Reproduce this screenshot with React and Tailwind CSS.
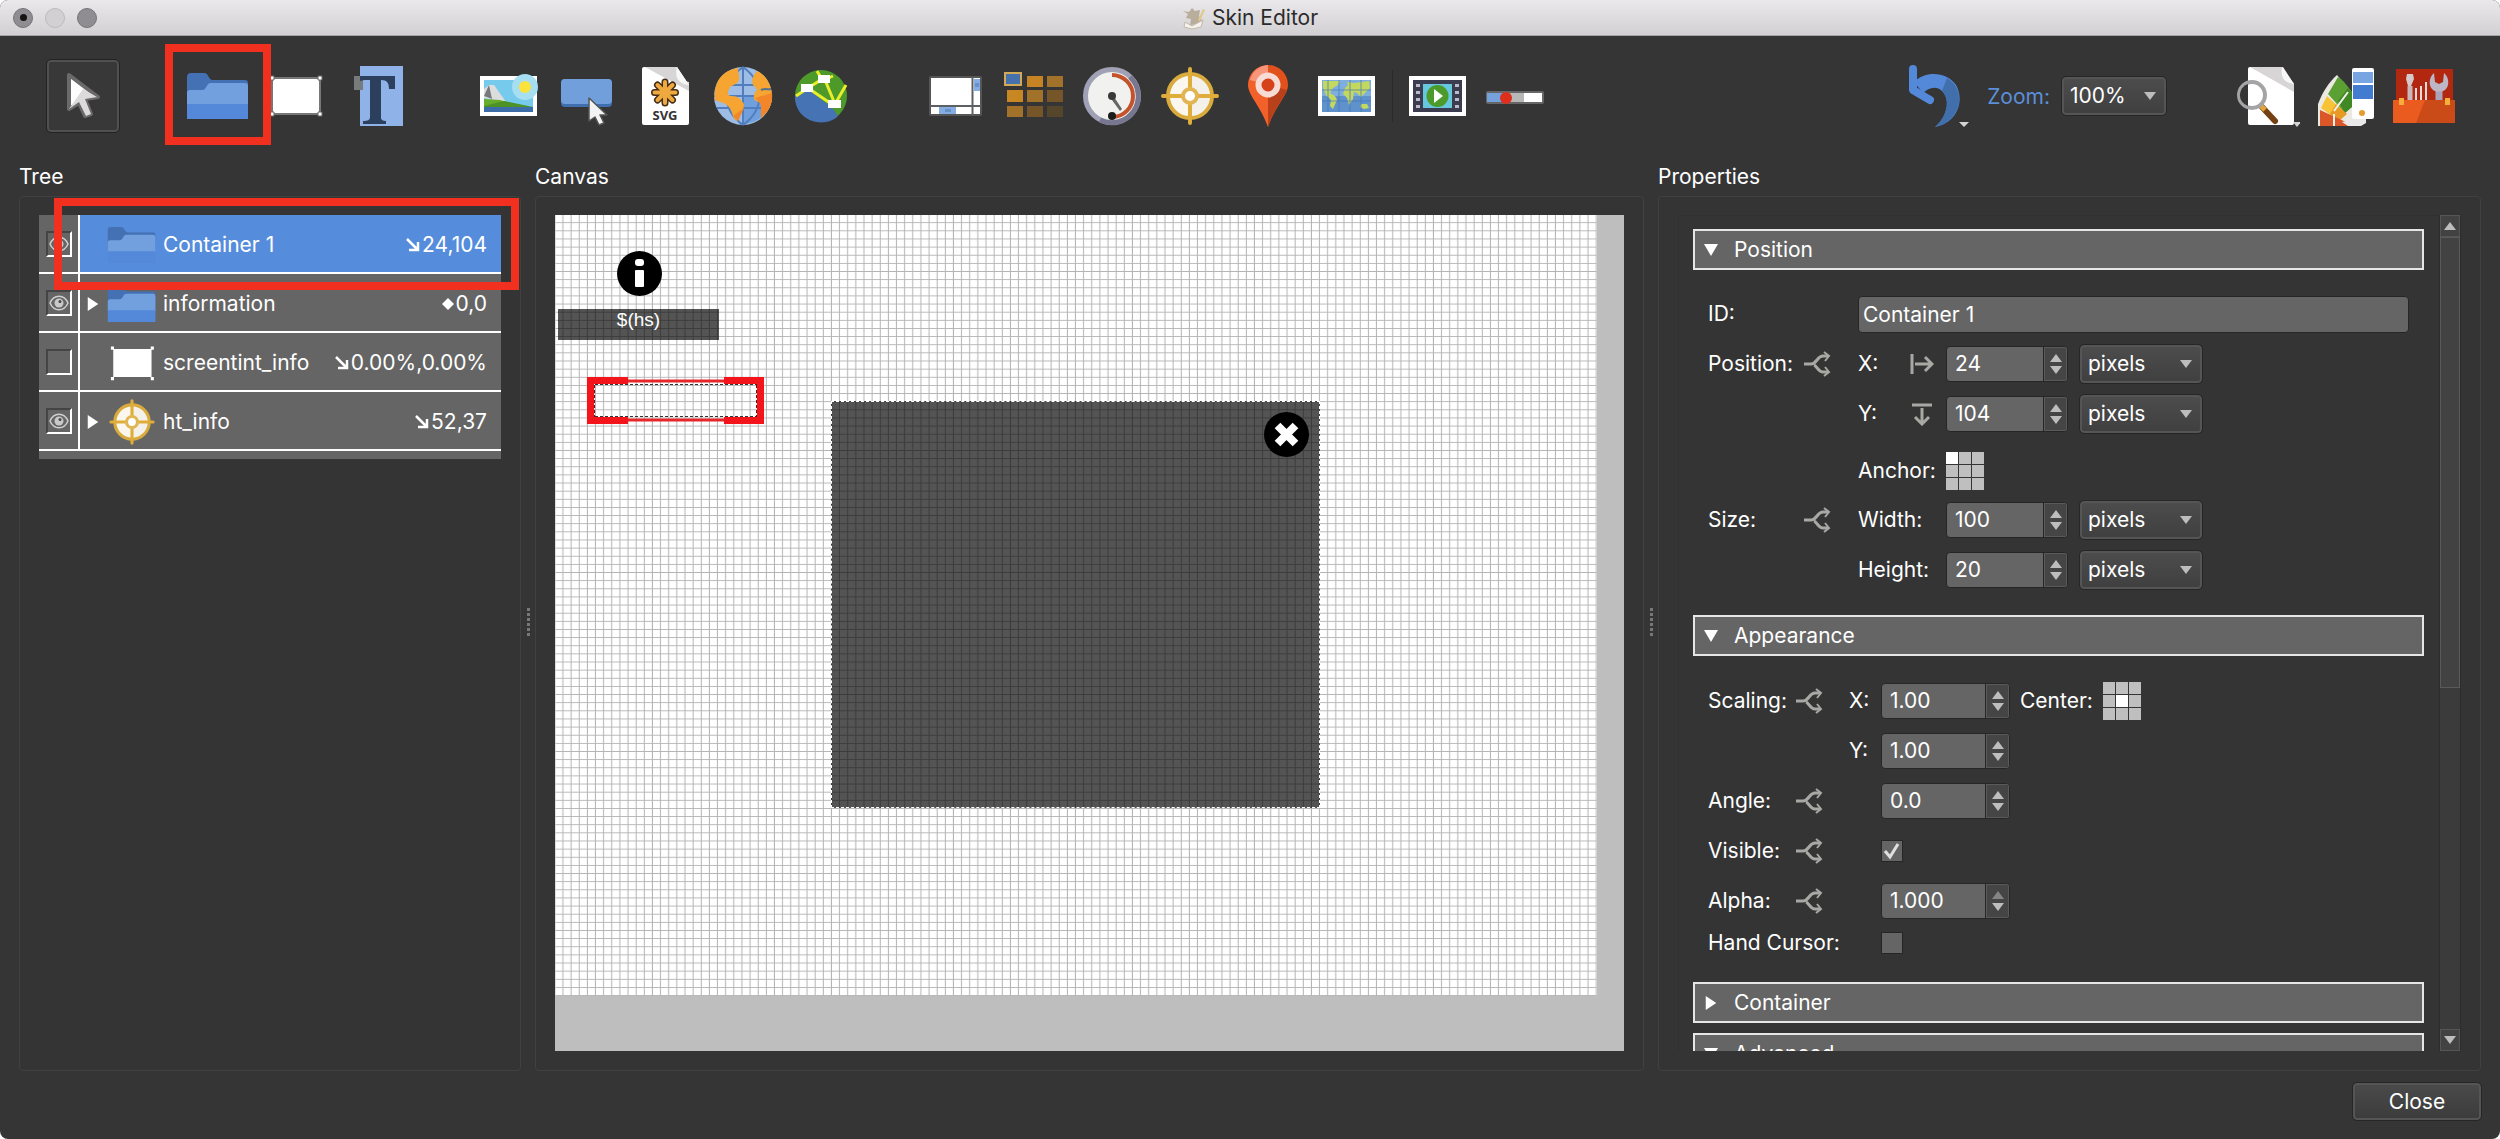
import React from 'react';

const CrosshairShape = () => (
  <>
    <circle cx="32" cy="32" r="22" fill="#fbf7ee" stroke="#d9ab3c" strokeWidth="4" />
    <path d="M32 12a20 20 0 0 1 0 40z" fill="#efece6" opacity=".6" />
    <path d="M32 5v18M32 41v18M5 32h18M41 32h18" stroke="#dfae3a" strokeWidth="4" strokeLinecap="round" />
    <circle cx="32" cy="32" r="7" fill="#fff" stroke="#e0b552" strokeWidth="4" />
  </>
);

const FolderShape = () => (
  <>
    <path d="M1 13a4 4 0 0 1 4-4h13c5 0 4 7 9 7h32a3 3 0 0 1 3 3v20H1z" fill="#4371b3" />
    <path d="M1 28a3 3 0 0 1 3-2h12c5 0 4-7 9-7h34a3 3 0 0 1 3 3v19H1z" fill="#72a0de" />
    <path d="M1 40h61v15H1z" fill="#5389d8" />
  </>
);

const Icon = ({ children, className = 'h-16 w-16' }) => (
  <svg viewBox="0 0 64 64" className={className} aria-hidden="true">
    {children}
  </svg>
);

const ArrowIcon = () => (
  <Icon>
    <path d="M18 11v34l10-6 6 13 6-2-6-15 13-2z" fill="#fdfdfd" stroke="#6a6a6a" strokeWidth="4" strokeLinejoin="round" />
    <path d="M18 45l14-20 14 8-12 2 6 15-5 2-7-14z" fill="#dcdada" />
  </Icon>
);

const FolderIcon = () => (
  <Icon>
    <FolderShape />
  </Icon>
);

const RectangleIcon = () => (
  <Icon>
    <path d="M8 14h48v36H8z" fill="#fff" stroke="#777" strokeWidth="2" />
    <path d="M6 12h4v4H6zM54 12h4v4h-4zM6 48h4v4H6zM54 48h4v4h-4z" fill="#fff" stroke="#666" />
  </Icon>
);

const TextIcon = () => (
  <Icon>
    <path d="M18 2h43v60H18z" fill="#8fb2e8" />
    <path d="M12 12h9v14h-9z" fill="#777b7c" />
    <path d="M18 12h35v13h-6c0-6-2-9-8-9v38c0 2 2 3 5 3v3H21v-3c5 0 7-1 7-4V16h-4c-2 0-3 0-6 1z" fill="#2c405e" />
  </Icon>
);

const PictureIcon = () => (
  <Icon>
    <path d="M3 12h57v40H3z" fill="#fff" />
    <path d="M7 16h49v32H7z" fill="#76cbed" />
    <circle cx="48" cy="23" r="13" fill="#a6def2" />
    <circle cx="48" cy="23" r="6" fill="#fbe23c" />
    <path d="M7 34v-9l5-4 5 0 12 17z" fill="#dcdedd" />
    <path d="M7 32l5-11 3 14z" fill="#77787c" />
    <path d="M7 35l16 1 26 7v1H7z" fill="#69ad2c" />
    <path d="M7 42l20-5 29 6v4H7z" fill="#4c9226" />
    <path d="M7 43h49v5H7z" fill="#3d6da9" />
  </Icon>
);

const ButtonIcon = () => (
  <Icon>
    <rect x="6" y="15" width="51" height="28" rx="4" fill="#3f6fae" />
    <rect x="6" y="15" width="51" height="25" rx="4" fill="#719fdb" />
    <path d="M34 34v23l6-4 4 8 5-2-4-8h7z" fill="#f3f3f3" stroke="#555" strokeWidth="1.5" strokeLinejoin="round" />
  </Icon>
);

const SvgFileIcon = () => (
  <Icon>
    <path d="M11 3h33l12 18v38a2 2 0 0 1-2 2H11a2 2 0 0 1-2-2V5a2 2 0 0 1 2-2z" fill="#fff" />
    <path d="M12 3h32c-1 7 1 13 12 15v9z" fill="#d7d5d6" />
    <path d="M44 3l12 18c-10-1-15-7-12-18z" fill="#f7f7f7" />
    <g strokeLinecap="round">
      <path d="M32 18v21M21.500 28.500h21M24.500 21l15 15M39.500 21l-15 15" stroke="#432e16" strokeWidth="7" />
      <path d="M32 18v21M21.500 28.500h21M24.500 21l15 15M39.500 21l-15 15" stroke="#f0a93f" strokeWidth="4" />
    </g>
    <text x="32" y="56" textAnchor="middle" fontSize="13" fontWeight="700" fontFamily="Open Sans, sans-serif" fill="#333">SVG</text>
  </Icon>
);

const GlobeIcon = () => (
  <Icon>
    <circle cx="32" cy="32" r="29" fill="#9dbde6" />
    <path d="M32 32h28a28 28 0 0 1-28 28z" fill="#6f9fdc" />
    <path d="M32 3v58M5 21h54M3 32h58M6 44h52M32 3c-22 16-22 42 0 58M32 3c22 16 22 42 0 58" fill="none" stroke="#527ebd" strokeWidth="2" />
    <path d="M4 36C2 16 13 6 27 4c0 5 2 9 1 12-2 6-9 4-10 10-3 4 0 6 3 6 6 0 9 3 12 8 0 7-5 10-7 17-5-2-4-10-8-14-5-5-10-5-14-7z" fill="#f6a532" />
    <path d="M46 7c-4 5-6 8-4 14l4 4c-3 5-5 9-1 12 5 1 6 4 5 9v8c6-5 11-12 11-21C61 21 55 11 46 7z" fill="#f6a532" />
    <path d="M44 34l17-5c1 10-3 18-11 25v-9c1-5-2-7-6-11zM22 52l11-8-6 13z" fill="#f28629" />
    <path d="M50 26c4-2 7 0 10-1" stroke="#51718e" strokeWidth="2" fill="none" />
  </Icon>
);

const NetworkGlobeIcon = () => (
  <Icon>
    <circle cx="32" cy="32" r="26" fill="#4d9a2b" />
    <path d="M6 32c8-9 17-7 22 0 5 6 14 7 21 20C38 64 6 60 6 32z" fill="#4673b4" />
    <path d="M28 7l6 10M7 32l12-8 16-10M19 24l25 17M36 16l10 24 11-19M35 16l9-4" stroke="#e8ee2a" strokeWidth="3" fill="none" />
    <path d="M29 11h12v8H29zM12 20h12v8H12zM39 36h13v8H39z" fill="#fff" />
  </Icon>
);

const ScrollAreaIcon = () => (
  <Icon>
    <rect x="6" y="13" width="51" height="38" rx="1" fill="#fff" stroke="#555" strokeWidth="2" />
    <path d="M50 15h6v12h-6z" fill="#86ade2" />
    <path d="M15 43h17v7H15z" fill="#86ade2" />
    <path d="M48.500 13v38M6 42h51" stroke="#5d6063" strokeWidth="2" />
    <path d="M22 45v3M24 45v3M26 45v3M51 20h4M51 22h4" stroke="#4b75b2" />
  </Icon>
);

const ClonerIcon = () => (
  <Icon>
    <path d="M25 12h16v11H25z" fill="#c58323" />
    <path d="M45 12h16v11H45z" fill="#a2712a" />
    <path d="M5 26h16v12H5z" fill="#c98724" />
    <path d="M25 26h16v12H25z" fill="#a2712a" />
    <path d="M45 26h16v12H45z" fill="#765529" />
    <path d="M5 42h16v11H5z" fill="#a2712a" />
    <path d="M25 42h16v11H25z" fill="#765529" />
    <path d="M45 42h16v11H45z" fill="#55452b" />
    <path d="M3 9h16v12H3z" fill="#4571ad" stroke="#d1a958" strokeWidth="2" />
  </Icon>
);

const GaugeIcon = () => (
  <Icon>
    <circle cx="32" cy="32" r="26.500" fill="#f1f1ef" stroke="#a1a1b6" strokeWidth="5" />
    <path d="M20 56a26.500 26.500 0 0 0 30-43" fill="none" stroke="#77778f" strokeWidth="5" />
    <path d="M32 11a21 21 0 0 1 0 42" fill="none" stroke="#c4532b" strokeWidth="4" />
    <path d="M29 32l3-2 10 15-2 2z" fill="#666" />
    <circle cx="32" cy="32" r="4" fill="#3a3a3a" />
    <circle cx="32" cy="52" r="4" fill="#1c1c1c" />
  </Icon>
);

const CrosshairIcon = () => (
  <Icon>
    <CrosshairShape />
  </Icon>
);

const PinIcon = () => (
  <Icon>
    <path d="M32 1a20 20 0 0 0-20 20c0 10 12 20 20 42z" fill="#f2612a" />
    <path d="M32 1a20 20 0 0 1 20 20c0 10-12 20-20 42z" fill="#e2511c" />
    <path d="M32 21l19 5c-3 9-13 18-19 37z" fill="#b8401a" />
    <path d="M32 1a20 20 0 0 0-18 15l18 5z" fill="#f9957a" />
    <circle cx="32" cy="21" r="9.500" fill="#d6421a" stroke="#f7dcd6" strokeWidth="6" />
  </Icon>
);

const MapIcon = () => (
  <Icon>
    <path d="M4 12h57v40H4z" fill="#fff" />
    <path d="M8 16h49v32H8z" fill="#7eaedd" />
    <path d="M8 32h49v16H8z" fill="#5f91cd" />
    <path d="M9 17h17l-2 4-5 3-3 5 5 3 2 4-4 9-3-3 1-6-5-5-3-7zM33 18l7 1 15-2 1 7-5 5-4 4-4-4-3-1-1 7-4 6-2-7-4-4 2-6 3-3zM47 40l6 0 2 4-5 1-4-2z" fill="#c2d860" />
    <path d="M14 16v32M25 16v32M36 16v32M47 16v32M8 26h49M8 37h49" stroke="#4676b4" strokeWidth="1" opacity=".7" />
  </Icon>
);

const VideoIcon = () => (
  <Icon>
    <path d="M4 12h57v40H4z" fill="#fff" />
    <path d="M8 16h49v32H8z" fill="#3c3c50" />
    <path d="M18 20h29v24H18z" fill="#65c8de" />
    <path d="M11 20h4v3h-4zM11 27h4v3h-4zM11 34h4v3h-4zM11 41h4v3h-4zM50 20h4v3h-4zM50 27h4v3h-4zM50 34h4v3h-4zM50 41h4v3h-4z" fill="#bcbcc8" />
    <circle cx="32.500" cy="32" r="11" fill="#4c9a2a" />
    <path d="M29 25l9 7-9 7z" fill="#fff" />
  </Icon>
);

const SeekbarIcon = () => (
  <Icon>
    <rect x="3" y="27" width="58" height="13" rx="2" fill="#666" />
    <path d="M4 29h16v9H4z" fill="#75a2dc" />
    <path d="M26 29h15v9H26z" fill="#b8b8b8" />
    <path d="M41 29h18v9H41z" fill="#fff" />
    <circle cx="23" cy="34" r="6" fill="#de2f1c" />
  </Icon>
);

const UndoIcon = () => (
  <Icon>
    <path d="M8 5v21l17 10" fill="none" stroke="#5389d8" strokeWidth="8" strokeLinecap="round" strokeLinejoin="round" />
    <path d="M9 18c12-12 33-10 42 3 9 16 1 38-21 42 12-10 16-27 7-36-6-6-14-3-19 2z" fill="#5389d8" />
    <path d="M42 14c20 12 15 43-12 49 12-10 16-27 7-36z" fill="#416fac" />
    <path d="M54 58h10l-5 5z" fill="#d4d4d4" />
  </Icon>
);

const PreviewIcon = () => (
  <Icon>
    <path d="M14 3h33l11 17v39a2 2 0 0 1-2 2H14a2 2 0 0 1-2-2V5a2 2 0 0 1 2-2z" fill="#fff" />
    <path d="M14 3h33c-2 10 2 14 11 17v8z" fill="#d7d5d6" />
    <path d="M46 3l12 17c-9-1-14-6-12-17z" fill="#f7f7f7" />
    <path d="M26 43l13 14" stroke="#754012" strokeWidth="6" strokeLinecap="round" />
    <path d="M25 42l4 4" stroke="#e0a63c" strokeWidth="5" />
    <circle cx="16" cy="31" r="13" fill="#fff" stroke="#a4a4a6" strokeWidth="4" />
    <path d="M12 20a11.500 11.500 0 0 0 0 22z" fill="#353535" />
    <path d="M57 58h8l-4 5z" fill="#d4d4d4" />
  </Icon>
);

const SwatchesIcon = () => (
  <Icon>
    <path d="M4 62V40c4-11 11-22 19-29l17 20v31z" fill="#ece9e2" />
    <path d="M24 13c5 3 10 9 15 17v12l-8 7-17-19z" fill="#5ba032" />
    <path d="M24 37l10-13 5 6v12l-8 7z" fill="#3f8824" />
    <path d="M13 32l18 17-6 8-18-13z" fill="#f8c334" />
    <path d="M22 40l11 10-8 7-9-7z" fill="#e89b24" />
    <path d="M6 46l28 13v3H6z" fill="#dc5728" />
    <path d="M20 50v12M20 47l14-19" stroke="#f5f0e8" strokeWidth="2" />
    <path d="M28 58l24-6v7l-5 3H34z" fill="#e9e9e9" />
    <rect x="38" y="4" width="22" height="51" rx="2" fill="#fff" />
    <path d="M39 8h20v11H39z" fill="#78a5e1" />
    <path d="M39 21h20v14H39z" fill="#437bd0" />
    <circle cx="48" cy="49" r="3" fill="#e59c2e" />
  </Icon>
);

const ToolboxIcon = () => (
  <Icon>
    <path d="M4 5h57v33H4z" fill="#b12710" />
    <path d="M18 22v15" stroke="#c8b7bb" strokeWidth="5" />
    <path d="M15 10h6l1 5-3 7h-3l-2-7z" fill="#d5c9cc" />
    <path d="M24 24v12M29 22v14M34 18v18" stroke="#e6dada" strokeWidth="2" />
    <path d="M47 26v12" stroke="#a9a4b9" strokeWidth="7" />
    <path d="M42 9l1 9 4 2 4-2 1-9c5 4 6 13 1 17-3 2-9 2-12 0-5-4-4-13 1-17z" fill="#bdb6c6" />
    <path d="M1 36h62v23H1z" fill="#ea5b20" />
    <path d="M33 36h30v23H24z" fill="#cb4b18" />
    <path d="M7 34h5v7H7zM53 34h5v7h-5z" fill="#f5ad3c" />
  </Icon>
);

const BranchIcon = () => (
  <svg viewBox="0 0 28 26" className="h-[26px] w-7" fill="none" stroke="#a8a8a4" strokeWidth="3" aria-hidden="true">
    <path d="M1 13h7c6 0 6-8 12-8h5" />
    <path d="M11 14c3 1 4 7 9 7h5" />
    <path d="M21 1l5 4-4 5M22 16l4 5-5 4" strokeWidth="2" />
  </svg>
);

const EyeIcon = () => (
  <svg viewBox="0 0 20 16" className="pointer-events-none absolute left-[3px] top-[5px] h-4 w-5" aria-hidden="true">
    <path d="M1 8c4-9 14-9 18 0-4 9-14 9-18 0z" fill="none" stroke="#d0d0d0" strokeWidth="1.5" />
    <circle cx="10" cy="8" r="4.500" fill="#c9c9c9" />
    <circle cx="11" cy="6.500" r="1.500" fill="#4a4a4a" />
  </svg>
);

const Triangle = ({ dir, className }) => {
  const points = { up: '0,10 16,10 8,0', down: '0,0 16,0 8,10', right: '2,0 14,5 2,10' }[dir];
  return (
    <svg viewBox="0 0 16 10" preserveAspectRatio="none" className={className} fill="currentColor" aria-hidden="true">
      <polygon points={points} />
    </svg>
  );
};

const ToolButton = ({ label, active, marked, children }) => (
  <button
    type="button"
    aria-label={label}
    className={`relative flex h-[72px] w-[72px] shrink-0 items-center justify-center rounded ${
      active ? 'border-2 border-[#505050] bg-[#383838] outline outline-[#232323]' : ''
    }`}
  >
    {children}
    {marked && <span className="absolute -left-[17px] -top-4 z-10 h-[101px] w-[106px] border-8 border-[#f2301f]" />}
  </button>
);

const Toolbar = () => (
  <div className="flex h-[120px] shrink-0 items-center pl-[47px] pr-10">
    <ToolButton label="Select" active><ArrowIcon /></ToolButton>
    <div className="ml-[63px] flex gap-1.5">
      <ToolButton label="Add Container" marked><FolderIcon /></ToolButton>
      <ToolButton label="Add Rectangle"><RectangleIcon /></ToolButton>
      <ToolButton label="Add Text"><TextIcon /></ToolButton>
    </div>
    <div className="ml-[63px] flex gap-1.5">
      <ToolButton label="Add Image"><PictureIcon /></ToolButton>
      <ToolButton label="Add Button"><ButtonIcon /></ToolButton>
      <ToolButton label="Add SVG"><SvgFileIcon /></ToolButton>
      <ToolButton label="Add External"><GlobeIcon /></ToolButton>
      <ToolButton label="Add Node Markers"><NetworkGlobeIcon /></ToolButton>
    </div>
    <div className="ml-[63px] flex gap-1.5">
      <ToolButton label="Add Scroll Area"><ScrollAreaIcon /></ToolButton>
      <ToolButton label="Add Cloner"><ClonerIcon /></ToolButton>
      <ToolButton label="Add Gauge"><GaugeIcon /></ToolButton>
      <ToolButton label="Add Hotspot"><CrosshairIcon /></ToolButton>
      <ToolButton label="Add Marker"><PinIcon /></ToolButton>
      <ToolButton label="Add Map"><MapIcon /></ToolButton>
    </div>
    <div className="ml-2.5 h-[52px] w-px bg-[#2a2a2a]" />
    <div className="ml-2 flex gap-1.5">
      <ToolButton label="Add Video"><VideoIcon /></ToolButton>
      <ToolButton label="Add Seekbar"><SeekbarIcon /></ToolButton>
    </div>
    <div className="ml-auto flex items-center">
      <ToolButton label="Undo"><UndoIcon /></ToolButton>
      <label htmlFor="zoom" className="ml-3.5 mr-3 pt-0.5 text-[#5b8fd9]">Zoom:</label>
      <Dropdown id="zoom" value="100%" className="w-[104px]" />
      <div className="ml-[66px] flex gap-1.5">
        <ToolButton label="Preview"><PreviewIcon /></ToolButton>
        <ToolButton label="Skin Colors"><SwatchesIcon /></ToolButton>
        <ToolButton label="Toolbox"><ToolboxIcon /></ToolButton>
      </div>
    </div>
  </div>
);

const Dropdown = ({ id, value, label, className }) => (
  <div className={`relative shrink-0 ${className}`}>
    <select
      id={id}
      aria-label={label}
      defaultValue={value}
      className="h-[38px] w-full appearance-none rounded border-2 border-[#555] bg-gradient-to-b from-[#4c4c4c] to-[#404040] pl-1.5 text-white outline outline-[#262626]"
    >
      <option>{value}</option>
    </select>
    <Triangle dir="down" className="pointer-events-none absolute right-2.5 top-[15px] h-2 w-3 text-[#bdbdbd]" />
  </div>
);

const SpinBox = ({ id, value, className = 'w-[122px]', atMax }) => (
  <div className={`flex h-9 shrink-0 overflow-hidden rounded border border-[#262626] bg-[#656565] ${className}`}>
    <input id={id} type="text" inputMode="decimal" defaultValue={value} className="min-w-0 flex-1 bg-transparent pl-2 text-white outline-none" />
    <div className="flex w-6 flex-col items-center justify-center gap-1 border-l border-[#262626] bg-[#454545] shadow-[inset_0_0_0_1px_#5a5a5a]">
      <button type="button" aria-label="Increase" disabled={atMax} className="text-[#bdbdbd] disabled:text-[#858585]">
        <Triangle dir="up" className="h-2 w-3" />
      </button>
      <button type="button" aria-label="Decrease" className="text-[#bdbdbd]">
        <Triangle dir="down" className="h-2 w-3" />
      </button>
    </div>
  </div>
);

const CheckBox = ({ id, checked }) => (
  <div className="relative h-[22px] w-[22px]">
    <input id={id} type="checkbox" defaultChecked={checked} className="block h-[22px] w-[22px] appearance-none border border-[#262626] bg-[#656565]" />
    {checked && (
      <svg viewBox="0 0 22 22" className="pointer-events-none absolute inset-0" fill="none" stroke="#e0e0e0" strokeWidth="3" aria-hidden="true">
        <path d="M4 11l5 6 8-13" />
      </svg>
    )}
  </div>
);

const AnchorGrid = ({ selected, label }) => (
  <div role="group" aria-label={label} className="grid h-[38px] w-[38px] grid-cols-3 gap-px">
    {[0, 1, 2, 3, 4, 5, 6, 7, 8].map((i) => (
      <button key={i} type="button" aria-label={`${label} ${i + 1}`} className={i === selected ? 'bg-white' : 'bg-[#bfbfbf]'} />
    ))}
  </div>
);

const treeItems = [
  { name: 'Container 1', sign: '↘', pos: '24,104', icon: 'folder', visible: true, selected: true },
  { name: 'information', sign: '◆', pos: '0,0', icon: 'folder', visible: true, children: true },
  { name: 'screentint_info', sign: '↘', pos: '0.00%,0.00%', icon: 'rect', visible: false },
  { name: 'ht_info', sign: '↘', pos: '52,37', icon: 'hotspot', visible: true, children: true },
];

const TreeIcon = ({ type }) => {
  if (type === 'folder') {
    return (
      <Icon className="h-[50px] w-[50px]">
        <FolderShape />
      </Icon>
    );
  }
  if (type === 'rect') {
    return (
      <Icon className="h-[50px] w-[50px]">
        <path d="M8 14h49v36H8z" fill="#fff" />
        <path d="M5 11h4v4H5zM56 11h4v4h-4zM5 50h4v4H5zM56 50h4v4h-4z" fill="#fff" />
      </Icon>
    );
  }
  return (
    <Icon className="h-[50px] w-[50px]">
      <CrosshairShape />
    </Icon>
  );
};

const PositionSign = ({ sign }) =>
  sign === '◆' ? (
    <svg viewBox="0 0 12 12" className="mr-0.5 h-3 w-3" fill="#fff" aria-hidden="true">
      <path d="M6 0l6 6-6 6-6-6z" />
    </svg>
  ) : (
    <svg viewBox="0 0 14 14" className="mr-0.5 h-3.5 w-3.5" fill="none" stroke="#fff" strokeWidth="2.500" aria-hidden="true">
      <path d="M1 1l10 10M3 12h9V4" />
    </svg>
  );

const TreePanel = () => (
  <div className="relative w-full bg-[#656565] pb-2">
    <ul>
      {treeItems.map((item) => (
        <li key={item.name} className="flex h-[59px] border-b-2 border-white">
          <label className="relative w-[41px] shrink-0 border-r-2 border-white pl-[7px] pt-4">
            <span className="relative block h-[26px] w-[26px]">
              <input
                type="checkbox"
                aria-label={`Show ${item.name}`}
                defaultChecked={item.visible}
                className="block h-[26px] w-[26px] appearance-none border-2 border-b-white border-l-[#444] border-r-white border-t-[#444]"
              />
              {item.visible && <EyeIcon />}
            </span>
          </label>
          <div className={`flex flex-1 items-center pr-3.5 pt-0.5 ${item.selected ? 'bg-[#558cdb]' : ''}`}>
            <span className="w-[27px] shrink-0 pl-1.5">
              {item.children && <Triangle dir="right" className="h-3.5 w-3.5" />}
            </span>
            <TreeIcon type={item.icon} />
            <span className="ml-1.5">{item.name}</span>
            <span className="ml-auto flex items-center">
              <PositionSign sign={item.sign} />
              {item.pos}
            </span>
          </div>
        </li>
      ))}
    </ul>
    <span className="pointer-events-none absolute -right-[18px] -top-[17px] left-[15px] h-[92px] border-8 border-[#f2301f]" />
  </div>
);

const CanvasPanel = () => (
  <div className="relative h-full w-full overflow-hidden bg-[#bebebe]">
    <svg viewBox="0 0 1024 768" className="block h-[781px] w-[1042px]" aria-hidden="true">
      <defs>
        <pattern id="grid" width="8" height="8" patternUnits="userSpaceOnUse">
          <path d="M8 0v8H0" fill="none" stroke="#b4b4b4" strokeWidth="2" />
        </pattern>
      </defs>
      <rect width="1024" height="768" fill="#fff" />
      <rect width="1024" height="768" fill="url(#grid)" />
    </svg>

    <svg viewBox="0 0 45 45" className="absolute left-[62px] top-9 h-[45px] w-[45px]" aria-hidden="true">
      <circle cx="22.500" cy="22.500" r="22.500" fill="#000" />
      <rect x="18" y="8" width="9" height="7" rx="3" fill="#fff" />
      <rect x="18" y="19" width="9" height="17" rx="1" fill="#fff" />
    </svg>
    <div className="absolute left-[3px] top-[94px] h-[31px] w-[161px] bg-black/67 text-center font-['Liberation_Sans',sans-serif] text-[19px] leading-[22px]">
      $(hs)
    </div>

    {/* selected container with its resize handles */}
    <svg viewBox="0 0 177 47" className="absolute left-8 top-[162px] h-[47px] w-[177px]" fill="none" aria-hidden="true">
      <path d="M41 4h96M41 43h96" stroke="#e8262a" strokeWidth="3" />
      <path d="M8 7.500h162M8 39.500h162" stroke="#333" strokeDasharray="3 2" />
      <path d="M41 3.500H3.500v40H41M137 3.500h36.500v40H137" stroke="#f4151c" strokeWidth="7" />
      <path d="M7.500 8v32M169.500 8v32" stroke="#701014" strokeDasharray="3 2" />
    </svg>

    <div className="absolute left-[276px] top-[186px] h-[407px] w-[489px] border border-dashed border-white bg-black/67">
      <button type="button" aria-label="Close information" className="absolute right-2.5 top-2.5">
        <svg viewBox="0 0 45 45" className="block h-[45px] w-[45px]" aria-hidden="true">
          <circle cx="22.500" cy="22.500" r="22.500" fill="#000" />
          <path d="M13.500 13.500l18 18M31.500 13.500l-18 18" stroke="#fff" strokeWidth="8" />
        </svg>
      </button>
    </div>
  </div>
);

const Section = ({ title, open, children }) => (
  <section>
    <button
      type="button"
      aria-expanded={open}
      className="flex h-[41px] w-full items-center border-2 border-[#e6e6e6] bg-[#656565] pl-[9px] text-left"
    >
      <Triangle dir={open ? 'down' : 'right'} className={open ? 'h-3 w-3.5' : 'h-3.5 w-3.5'} />
      <span className="ml-4">{title}</span>
    </button>
    {children}
  </section>
);

const PositionRow = ({ label, branch, sub, icon, id, value }) => (
  <div className="flex h-[38px] items-center">
    <span className="w-[95px]">{label}</span>
    <span className="w-[55px]">{branch && <BranchIcon />}</span>
    <label htmlFor={id} className={icon ? 'w-[52px]' : 'w-[88px]'}>{sub}</label>
    {icon && <span className="w-9">{icon}</span>}
    <SpinBox id={id} value={value} />
    <Dropdown label={`${sub} unit`} value="pixels" className="ml-3 w-[122px]" />
  </div>
);

const AppearanceRow = ({ label, branch, sub, htmlFor, children }) => (
  <div className="flex h-[38px] items-center">
    {sub ? <span className="w-[87px]">{label}</span> : <label htmlFor={htmlFor} className="w-[87px]">{label}</label>}
    <span className="w-[54px]">{branch && <BranchIcon />}</span>
    <span className="w-8">{sub && <label htmlFor={htmlFor}>{sub}</label>}</span>
    {children}
  </div>
);

const axisIcon = (d) => (
  <svg viewBox="0 0 24 24" className="h-6 w-6" fill="none" stroke="#a8a8a4" strokeWidth="3" aria-hidden="true">
    <path d={d} />
  </svg>
);

const PropertiesPanel = () => (
  <div className="flex h-full w-full">
    <div className="h-full min-w-0 flex-1 overflow-hidden border-l border-t border-[#303030] pl-3.5 pr-[15px] pt-[13px]">
      <Section title="Position" open>
        <div className="flex flex-col gap-3 px-[15px] pb-[26px] pt-[25px]">
          <div className="flex h-[38px] items-center">
            <label htmlFor="item-id" className="w-[150px]">ID:</label>
            <input
              id="item-id"
              type="text"
              defaultValue="Container 1"
              className="h-[37px] min-w-0 flex-1 rounded-sm border border-[#262626] bg-[#656565] pl-1 text-white outline-none"
            />
          </div>
          <PositionRow label="Position:" branch sub="X:" icon={axisIcon('M2 2v20M5 12h16M15 5l7 7-7 7')} id="pos-x" value="24" />
          <PositionRow sub="Y:" icon={axisIcon('M2 3h20M12 6v16M5 15l7 7 7-7')} id="pos-y" value="104" />
          <div className="mt-2 flex h-9 items-center pl-[150px]">
            <span className="w-[88px]">Anchor:</span>
            <AnchorGrid label="Anchor" selected={0} />
          </div>
          <PositionRow label="Size:" branch sub="Width:" id="size-w" value="100" />
          <PositionRow sub="Height:" id="size-h" value="20" />
        </div>
      </Section>

      <Section title="Appearance" open>
        <div className="flex flex-col gap-3 px-[15px] pb-7 pt-[26px]">
          <AppearanceRow label="Scaling:" branch sub="X:" htmlFor="scale-x">
            <SpinBox id="scale-x" value="1.00" className="w-[129px]" />
            <span className="ml-2.5 w-[83px]">Center:</span>
            <AnchorGrid label="Center" selected={4} />
          </AppearanceRow>
          <AppearanceRow sub="Y:" htmlFor="scale-y">
            <SpinBox id="scale-y" value="1.00" className="w-[129px]" />
          </AppearanceRow>
          <AppearanceRow label="Angle:" branch htmlFor="angle">
            <SpinBox id="angle" value="0.0" className="w-[129px]" />
          </AppearanceRow>
          <AppearanceRow label="Visible:" branch htmlFor="visible">
            <CheckBox id="visible" checked />
          </AppearanceRow>
          <AppearanceRow label="Alpha:" branch htmlFor="alpha">
            <SpinBox id="alpha" value="1.000" className="w-[129px]" atMax />
          </AppearanceRow>
          <div className="flex h-[22px] items-center">
            <label htmlFor="hand-cursor" className="w-[173px]">Hand Cursor:</label>
            <CheckBox id="hand-cursor" />
          </div>
        </div>
      </Section>

      <Section title="Container" />
      <div className="h-2.5" />
      <Section title="Advanced" open />
    </div>

    <div className="flex h-full w-[22px] shrink-0 flex-col border-x border-[#2c2c2c] bg-[#3b3b3b]">
      <button type="button" aria-label="Scroll up" className="flex h-[22px] items-center justify-center border border-[#555] bg-[#424242]">
        <Triangle dir="up" className="h-2 w-3 text-[#bdbdbd]" />
      </button>
      <div className="h-[451px] border border-[#5a5a5a] bg-[#424242]" />
      <button type="button" aria-label="Scroll down" className="mt-auto flex h-[22px] items-center justify-center border border-[#555] bg-[#424242]">
        <Triangle dir="down" className="h-2 w-3 text-[#bdbdbd]" />
      </button>
    </div>
  </div>
);

const Panel = ({ title, className, children }) => (
  <div className={`flex min-h-0 flex-col ${className}`}>
    <h2 className="flex h-10 shrink-0 items-center pt-0.5">{title}</h2>
    <div className="flex min-h-0 flex-1 items-start rounded border border-[#414141] bg-[#343434] px-[19px] pb-[19px] pt-[18px]">
      {children}
    </div>
  </div>
);

const Splitter = () => (
  <div className="flex w-3.5 shrink-0 flex-col items-center justify-center gap-0.5 pt-4">
    {[0, 1, 2, 3, 4, 5].map((i) => (
      <span key={i} className="h-[3px] w-[3px] bg-[#777]" />
    ))}
  </div>
);

const TitleBar = () => (
  <header className="relative flex h-9 shrink-0 items-center justify-center border-b border-[#a5a3a5] bg-gradient-to-b from-[#eae8eb] to-[#d2d0d2] text-[#2b2b2b]">
    <div className="absolute left-[13px] flex gap-3">
      <button type="button" aria-label="Close window" className="flex h-5 w-5 items-center justify-center rounded-full border border-[#757378] bg-[#8f8d92]">
        <span className="h-[7px] w-[7px] rounded-full bg-[#151515]" />
      </button>
      <button type="button" aria-label="Minimize window" className="h-5 w-5 rounded-full border border-[#bbb] bg-[#d2d0d2]" />
      <button type="button" aria-label="Zoom window" className="h-5 w-5 rounded-full border border-[#757378] bg-[#8f8d92]" />
    </div>
    <svg viewBox="0 0 24 24" className="mr-1.5 h-6 w-6" aria-hidden="true">
      <path d="M1 5l6 1 3-4 3 3 5-1-1 6 3 4-4 4-8 1 1-6-5-1 2-4z" fill="#b9ad9c" />
      <path d="M3 16l7 4 11-6-2 7-9 2-8-2z" fill="#f4f1ee" stroke="#c4b8aa" />
      <path d="M16 14l5-11 2 1-5 11z" fill="#dfc98d" />
    </svg>
    <h1>Skin Editor</h1>
  </header>
);

export default function App() {
  return (
    <div className="flex h-screen flex-col overflow-hidden rounded-lg bg-[#353535] font-[Inter,sans-serif] text-[21px] leading-6 text-white">
      <TitleBar />
      <Toolbar />
      <main className="flex min-h-0 flex-1 px-[19px]">
        <Panel title="Tree" className="w-[502px] shrink-0">
          <TreePanel />
        </Panel>
        <Splitter />
        <Panel title="Canvas" className="min-w-0 flex-1">
          <CanvasPanel />
        </Panel>
        <Splitter />
        <Panel title="Properties" className="w-[823px] shrink-0">
          <PropertiesPanel />
        </Panel>
      </main>
      <footer className="flex h-[68px] shrink-0 justify-end px-[19px] pt-3">
        <button
          type="button"
          className="h-[37px] w-[128px] rounded border-2 border-[#555] bg-gradient-to-b from-[#4a4a4a] to-[#3c3c3c] outline outline-[#262626]"
        >
          Close
        </button>
      </footer>
    </div>
  );
}
